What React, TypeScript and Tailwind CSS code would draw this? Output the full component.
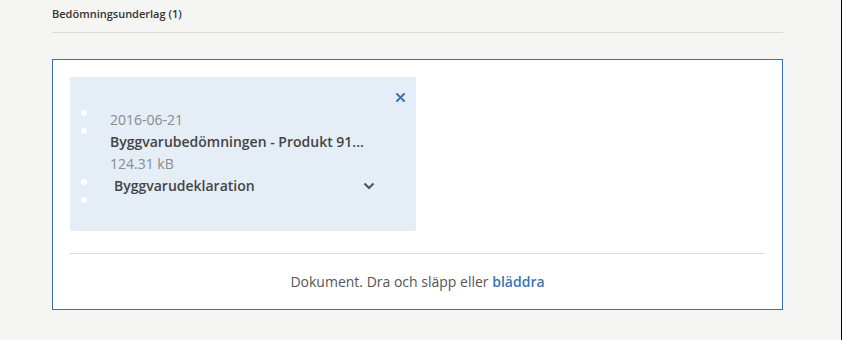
import React from 'react';

const Dot = () => <span className="block w-[6px] h-[6px] rounded-full bg-white" />;

export default function App() {
  return (
    <div
      className="w-[842px] h-[340px] bg-[#f5f5f3] border-r border-black pl-[52px] pr-[58px] pt-[6px]"
      style={{ fontFamily: '"Open Sans", "Liberation Sans", sans-serif' }}
    >
      {/* Header */}
      <div className="text-[11px] leading-[15px] font-semibold text-[#333] h-[26px]">Bedömningsunderlag (1)</div>
      <div className="h-px bg-[#dcdcdc]" />

      {/* Upload box */}
      <div className="mt-[26px] border border-[#3b73a8] bg-white p-[17px] pb-0 h-[251px]">
        <div className="relative w-[346px] h-[154px] bg-[#e5edf6] flex pt-[30px]">
          <button className="absolute right-[10px] top-[14px] w-[12px] h-[12px] flex items-center justify-center">
            <svg width="9" height="9" viewBox="0 0 9 9">
              <path d="M1 1L8 8M8 1L1 8" stroke="#3a75b0" strokeWidth="2" strokeLinecap="round" />
            </svg>
          </button>

          {/* drag handles */}
          <div className="w-[40px] flex flex-col items-start pl-[11px] pt-[3px]">
            <Dot />
            <div className="h-[12px]" />
            <Dot />
            <div className="h-[45px]" />
            <Dot />
            <div className="h-[12px]" />
            <Dot />
          </div>

          <div className="flex flex-col text-[14px] leading-[22px] pt-[2px]">
            <span className="text-[#8a8a8a]">2016-06-21</span>
            <span className="font-semibold text-[#444]">Byggvarubedömningen - Produkt 91...</span>
            <span className="text-[#8a8a8a]">124.31 kB</span>
            <div className="w-[268px] flex items-center justify-between pl-[4px] pr-[3px]">
              <span className="font-semibold text-[#444]">Byggvarudeklaration</span>
              <svg width="12" height="8" viewBox="0 0 12 8">
                <path d="M1.5 1.5L6 6L10.5 1.5" stroke="#555" strokeWidth="2.2" fill="none" />
              </svg>
            </div>
          </div>
        </div>

        <div className="mt-[22px] h-px bg-[#dcdcdc]" />
        <div className="h-[55px] flex items-center justify-center text-[14px] text-[#555]">
          <span>
            Dokument. Dra och släpp eller <a className="font-semibold text-[#3a75b0] cursor-pointer">bläddra</a>
          </span>
        </div>
      </div>
    </div>
  );
}
